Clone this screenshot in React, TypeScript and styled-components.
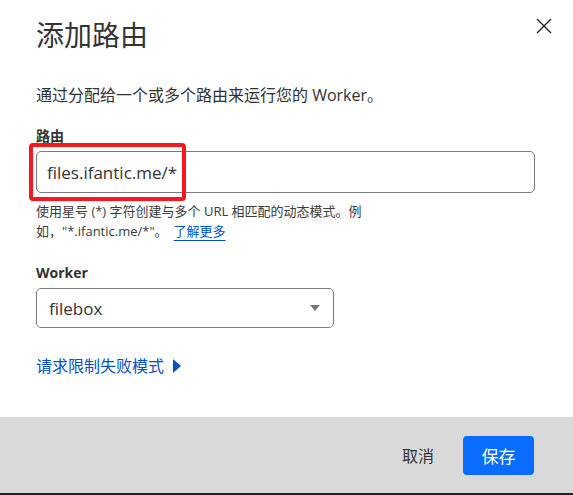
import styled, { createGlobalStyle } from "styled-components";

const GlobalStyle = createGlobalStyle`
  html, body {
    margin: 0;
    padding: 0;
    background: #fff;
  }
  body {
    font-family: "Open Sans", "Noto Sans CJK SC", sans-serif;
    color: #313131;
  }
`;

const Dialog = styled.div`
  width: 573px;
  height: 495px;
  display: flex;
  flex-direction: column;
  background: #fff;
  border-bottom: 2px solid #222;
  box-sizing: border-box;
`;

const Body = styled.div`
  position: relative;
  flex: 1;
  min-height: 0;
  padding: 16px 38px 0 36px;
`;

const Title = styled.h2`
  margin: 0;
  font-size: 28px;
  font-weight: 400;
  line-height: 38px;
  color: #333;
`;

const CloseButton = styled.button`
  position: absolute;
  top: 15px;
  right: 18px;
  width: 22px;
  height: 22px;
  padding: 0;
  border: 0;
  background: none;
  display: flex;
  align-items: center;
  justify-content: center;
`;

const Description = styled.p`
  margin: 30px 0 0;
  font-size: 16px;
  line-height: 22px;
`;

const Field = styled.div<{ $top: number }>`
  display: flex;
  flex-direction: column;
  margin-top: ${(p) => p.$top}px;
`;

const Label = styled.label`
  font-size: 14px;
  font-weight: 700;
  line-height: 20px;
  color: #313131;
  margin-bottom: 5px;
`;

const InputWrap = styled.div`
  position: relative;
`;

const Input = styled.div`
  height: 42px;
  box-sizing: border-box;
  border: 1px solid #7a7a7a;
  border-radius: 5px;
  padding: 0 10px;
  display: flex;
  align-items: center;
  font-size: 17px;
  color: #333;
`;

const Highlight = styled.div`
  position: absolute;
  left: -7px;
  top: -8px;
  width: 157px;
  height: 58px;
  box-sizing: border-box;
  border: 4px solid #f5191f;
  border-radius: 4px;
  pointer-events: none;
`;

const Help = styled.p`
  margin: 8px 0 0;
  width: 340px;
  font-size: 13px;
  line-height: 20px;
  color: #3a3a3a;
`;

const LearnMore = styled.a`
  display: inline-block;
  margin-left: 6px;
  color: #0051c3;
  text-decoration: underline;
  text-underline-offset: 4px;
`;

const Select = styled.div`
  width: 298px;
  height: 40px;
  box-sizing: border-box;
  border: 1px solid #7a7a7a;
  border-radius: 5px;
  padding: 0 13px 0 12px;
  display: flex;
  align-items: center;
  justify-content: space-between;
  font-size: 17px;
  color: #333;
`;

const Caret = styled.span`
  width: 0;
  height: 0;
  border-left: 5px solid transparent;
  border-right: 5px solid transparent;
  border-top: 6px solid #777;
`;

const Toggle = styled.a`
  display: inline-flex;
  align-items: center;
  gap: 9px;
  margin-top: 27px;
  font-size: 16px;
  line-height: 22px;
  color: #0051c3;
  text-decoration: none;
`;

const Arrow = styled.span`
  width: 0;
  height: 0;
  border-top: 7px solid transparent;
  border-bottom: 7px solid transparent;
  border-left: 8px solid #0051c3;
`;

const Footer = styled.div`
  flex-shrink: 0;
  height: 76px;
  box-sizing: border-box;
  background: #d9d9d9;
  display: flex;
  align-items: center;
  justify-content: flex-end;
  gap: 29px;
  padding: 0 39px 0 0;
`;

const TextButton = styled.button`
  border: 0;
  background: none;
  padding: 0;
  font-family: inherit;
  font-size: 16px;
  color: #333;
`;

const PrimaryButton = styled.button`
  width: 71px;
  height: 39px;
  border: 0;
  border-radius: 4px;
  background: #0a6cff;
  color: #fff;
  font-family: inherit;
  font-size: 17px;
`;

export default function App() {
  return (
    <>
      <GlobalStyle />
      <Dialog>
        <Body>
          <Title>添加路由</Title>
          <CloseButton aria-label="close">
            <svg width="16" height="16" viewBox="0 0 16 16">
              <path d="M1 1 L15 15 M15 1 L1 15" stroke="#222" strokeWidth="1.4" fill="none" />
            </svg>
          </CloseButton>
          <Description>通过分配给一个或多个路由来运行您的 Worker。</Description>
          <Field $top={20}>
            <Label>路由</Label>
            <InputWrap>
              <Input>files.ifantic.me/*</Input>
              <Highlight />
            </InputWrap>
            <Help>
              使用星号 (*) 字符创建与多个 URL 相匹配的动态模式。例如，"*.ifantic.me/*"。<LearnMore>了解更多</LearnMore>
            </Help>
          </Field>
          <Field $top={22}>
            <Label>Worker</Label>
            <Select>
              filebox
              <Caret />
            </Select>
          </Field>
          <Toggle>
            请求限制失败模式 <Arrow />
          </Toggle>
        </Body>
        <Footer>
          <TextButton>取消</TextButton>
          <PrimaryButton>保存</PrimaryButton>
        </Footer>
      </Dialog>
    </>
  );
}
